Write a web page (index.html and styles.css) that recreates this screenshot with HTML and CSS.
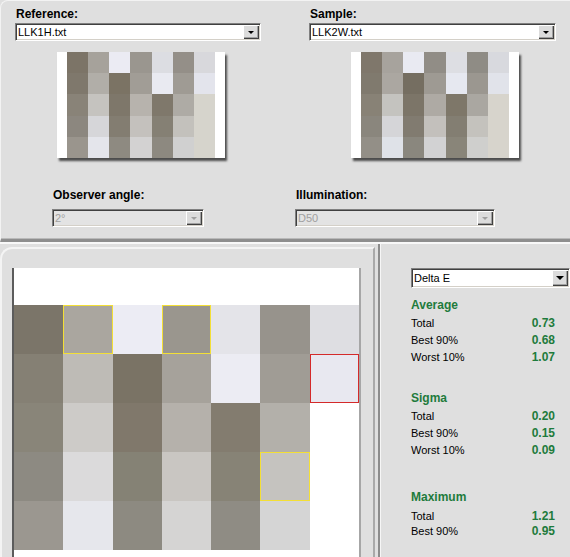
FILE: index.html
```html
<!DOCTYPE html>
<html lang="en">
<head>
  <meta charset="UTF-8" />
  <title>Color comparison</title>
  <link rel="stylesheet" href="styles.css">
</head>
<body>
  <div class="top-panel">
    <div class="file-cols">
      <div class="file-col">
        <div class="label">Reference:</div>
        <div class="select"><span>LLK1H.txt</span><i class="drop"></i></div>
        <div class="thumb" id="thumbRef"></div>
      </div>
      <div class="file-col">
        <div class="label">Sample:</div>
        <div class="select"><span>LLK2W.txt</span><i class="drop"></i></div>
        <div class="thumb" id="thumbSample"></div>
      </div>
    </div>
    <div class="options">
      <div class="opt opt-angle">
        <div class="label">Observer angle:</div>
        <div class="select disabled"><span>2°</span><i class="drop"></i></div>
      </div>
      <div class="opt opt-illum">
        <div class="label">Illumination:</div>
        <div class="select disabled"><span>D50</span><i class="drop"></i></div>
      </div>
    </div>
  </div>

  <div class="lower">
    <div class="chart-panel">
      <div class="canvas">
        <div class="cells" id="cells"></div>
      </div>
    </div>
    <div class="stats-panel">
      <div class="select select-metric"><span>Delta E</span><i class="drop"></i></div>

      <div class="stats-group first">
        <div class="stats-head">Average</div>
        <div class="stats-row"><span>Total</span><b>0.73</b></div>
        <div class="stats-row"><span>Best 90%</span><b>0.68</b></div>
        <div class="stats-row"><span>Worst 10%</span><b>1.07</b></div>
      </div>

      <div class="stats-group">
        <div class="stats-head">Sigma</div>
        <div class="stats-row"><span>Total</span><b>0.20</b></div>
        <div class="stats-row"><span>Best 90%</span><b>0.15</b></div>
        <div class="stats-row"><span>Worst 10%</span><b>0.09</b></div>
      </div>

      <div class="stats-group tight">
        <div class="stats-head">Maximum</div>
        <div class="stats-row"><span>Total</span><b>1.21</b></div>
        <div class="stats-row"><span>Best 90%</span><b>0.95</b></div>
      </div>
    </div>
  </div>

  <script>
    const refThumb = [
      ['#7c7467','#a6a29b','#ebebf3','#9a968f','#dcdde2','#948f88','#d8d8dc'],
      ['#7f786c','#b1aea8','#7b7364','#a19d96','#e9eaf1','#9f9b94','#e3e4ec'],
      ['#898378','#c5c3bf','#7e776a','#b7b3ad','#7f786b','#aeaba5','#d6d4cc'],
      ['#8c877f','#d6d6d9','#837d71','#c4c1bd','#858074','#c3c1bc','#d6d4cc'],
      ['#9a958d','#e4e5eb','#8e8a81','#d3d2d2','#8d8980','#d0d0d0','#d6d4cc']
    ];
    const sampleThumb = [
      ['#7f776b','#a7a39d','#e9eaf2','#918d86','#dddee3','#8f8c85','#d8d9de'],
      ['#807a6e','#aba7a1','#756e61','#9e9a93','#e6e8f0','#9b9790','#e1e3ea'],
      ['#888276','#c4c3bf','#7c7568','#aeaaa4','#7e7769','#aaa7a1','#d7d4cc'],
      ['#8a867d','#d5d5d8','#817b70','#c3c0bc','#837e72','#c4c2bd','#d7d4cc'],
      ['#938f87','#dfe2e8','#8a877e','#d2d2d3','#898579','#cfcfcd','#d7d4cc']
    ];
    const patches = [
      ['#7b7569','#aaa69f','#ececf4','#9a968e','#e4e4e9','#97938c','#dedee2'],
      ['#858074','#bebbb6','#7a7365','#a6a29b','#ececf3','#a09c95','#e8e8f0'],
      ['#898579','#cdcbc8','#80786b','#b5b1ab','#837c6f','#b3b0aa', null],
      ['#8d8a82','#dbdadb','#858275','#c9c6c2','#878376','#c5c3bf', null],
      ['#9b9790','#e6e7ec','#8d8a81','#d5d4d3','#8f8c84','#d5d5d5', null]
    ];
    // patches over the threshold
    const marks = { '0-1': 'warn', '0-3': 'warn', '3-5': 'warn', '1-6': 'fail' };

    function fillGrid(id, rows, withMarks) {
      const box = document.getElementById(id);
      rows.forEach((row, r) => {
        row.forEach((color, c) => {
          const cell = document.createElement('div');
          cell.className = 'cell';
          if (color) cell.style.background = color;
          if (withMarks && marks[r + '-' + c]) cell.classList.add('mark-' + marks[r + '-' + c]);
          box.appendChild(cell);
        });
      });
    }

    fillGrid('thumbRef', refThumb, false);
    fillGrid('thumbSample', sampleThumb, false);
    fillGrid('cells', patches, true);
  </script>
</body>
</html>
```

FILE: styles.css
```css
*, *::before, *::after {
  box-sizing: border-box;
}
body {
  margin: 0;
  width: 570px;
  height: 557px;
  overflow: hidden;
  background: #dfdfdf;
  color: #000;
  font-family: "Liberation Sans", Arial, sans-serif;
  font-size: 11px;
}

/* top panel */
.top-panel {
  height: 242px;
  padding: 6px 0 0 14px;
  border-top: 1px solid #f3f3f3;
  border-left: 1px solid #f3f3f3;
  border-bottom: 3px solid #8e8e8e;
  border-top-left-radius: 8px;
  box-shadow: inset 0 -1px 0 #b9b9b9;
}
.file-cols {
  display: grid;
  grid-template-columns: 246px 247px;
  column-gap: 48px;
}
.label {
  font-weight: bold;
  font-size: 12px;
  line-height: 14px;
  padding-left: 1px;
}
.select {
  position: relative;
  height: 18px;
  margin-top: 2px;
  padding: 1px 20px 0 2px;
  background: #fff;
  border: 1px solid;
  border-color: #808080 #fff #fff #808080;
  box-shadow: inset 1px 1px 0 #404040, inset -1px -1px 0 #d4d0c8;
  font-size: 11px;
  line-height: 14px;
  white-space: nowrap;
}
.drop {
  position: absolute;
  top: 1px;
  right: 1px;
  width: 16px;
  height: 14px;
  background: #dcdcdc;
  box-shadow: inset 1px 1px 0 #fff, inset -1px -1px 0 #404040, inset -2px -2px 0 #a0a0a0;
}
.drop::after {
  content: "";
  position: absolute;
  left: 5px;
  top: 6px;
  border-left: 3px solid transparent;
  border-right: 3px solid transparent;
  border-top: 3px solid #000;
}
.select.disabled {
  background: #e3e3e3;
  color: #a0a0a0;
}
.select.disabled .drop::after {
  border-top-color: #a0a0a0;
}
.thumb {
  display: grid;
  grid-template-columns: repeat(7, 1fr);
  grid-template-rows: repeat(5, 1fr);
  width: 168px;
  height: 106px;
  margin: 11px 0 0 42px;
  padding: 0 10px;
  background: #fff;
  box-shadow: 2px 3px 2px rgba(40, 40, 40, 0.8);
}

.options {
  display: flex;
  gap: 91px;
  margin-top: 30px;
  padding-left: 37px;
}
.opt-angle {
  width: 152px;
}
.opt-illum {
  width: 200px;
}
.options .select {
  margin-top: 7px;
}

/* lower half */
.lower {
  display: flex;
  height: 315px;
  border-top: 2px solid #f8f8f8;
}
.chart-panel {
  flex: 0 0 375px;
  margin-top: 3px;
  padding: 19px 0 0 12px;
  border-top: 2px solid #f4f4f4;
  border-left: 2px solid #f4f4f4;
  border-right: 2px solid #a9a9a9;
  border-top-left-radius: 12px;
}
.canvas {
  width: 345px;
  height: 320px;
  padding-top: 37px;
  background: #fff;
  box-shadow: -2px 0 0 #5c5c5c, 2px 0 0 #a6a6a6;
}
.cells {
  display: grid;
  grid-template-columns: repeat(7, 1fr);
  grid-auto-rows: 49px;
}
.mark-warn {
  border: 1px solid #f3df36;
}
.mark-fail {
  border: 1px solid #d42a2a;
}

.stats-panel {
  flex: 1;
  min-width: 0;
  margin-left: 3px;
  padding: 24px 15px 0 31px;
  border-left: 2px solid #8c8c8c;
  box-shadow: inset 1px 0 0 #f6f6f6;
}
.select-metric {
  width: 159px;
  height: 20px;
  margin-top: 0;
  padding-top: 2px;
}
.select-metric .drop {
  height: 16px;
}
.select-metric .drop::after {
  top: 6px;
  left: 4px;
  border-left-width: 4px;
  border-right-width: 4px;
  border-top-width: 4px;
}
.stats-group {
  margin-top: 25px;
}
.stats-group.first {
  margin-top: 10px;
}
.stats-head {
  margin-bottom: 3px;
  color: #1e7b3c;
  font-weight: bold;
  font-size: 12px;
  line-height: 14px;
}
.stats-row {
  display: flex;
  justify-content: space-between;
  line-height: 17px;
}
.stats-row b {
  color: #1e7b3c;
  font-size: 12px;
}
.stats-group.tight {
  margin-top: 31px;
}
.tight .stats-head {
  margin-bottom: 5px;
}
.tight .stats-row {
  line-height: 15px;
}
```
